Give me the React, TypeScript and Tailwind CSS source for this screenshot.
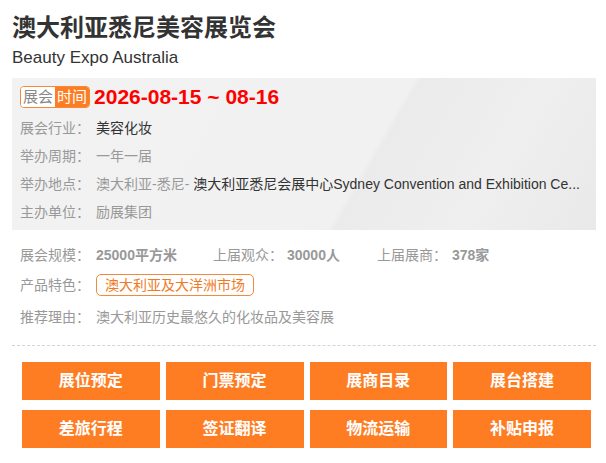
import React from "react";

const font = { fontFamily: '"Liberation Sans", Arial, "Noto Sans CJK SC", sans-serif' };

function Row({ label, children }: { label: string; children: React.ReactNode }) {
  return (
    <div className="flex h-[28px] items-center text-[14px] whitespace-nowrap">
      <span className="w-[76px] shrink-0 text-[#999]">{label}</span>
      <div className="min-w-0 flex-1 overflow-hidden">{children}</div>
    </div>
  );
}

const buttons = ["展位预定", "门票预定", "展商目录", "展台搭建", "差旅行程", "签证翻译", "物流运输", "补贴申报"];

export default function App() {
  return (
    <div className="w-[606px] h-[463px] bg-white text-[#333]" style={font}>
      <div className="px-[12px] pt-[13px]">
        <h1 className="text-[24px] font-bold leading-[30px] text-[#333]">澳大利亚悉尼美容展览会</h1>
        <div className="mt-[3px] text-[17px] leading-[24px] text-[#333]">Beauty Expo Australia</div>

        <div className="mt-[8px] h-[152px] w-[584px] bg-[#f1f1f1] pl-[8px] pr-[16px] pt-[8px]"
          style={{ backgroundImage: "linear-gradient(120deg, #f2f2f2 0%, #f1f1f1 60%, #ebebeb 61%, #efefef 80%, #e9e9e9 100%)" }}>
          <div className="flex h-[22px] items-center">
            <div className="flex h-[22px] overflow-hidden rounded-[4px] border border-[#f38a3a] text-[15px] leading-[20px]">
              <span className="bg-white px-[2px] text-[#888]">展会</span>
              <span className="bg-[#fe7d23] px-[2px] text-white">时间</span>
            </div>
            <span className="ml-[4px] text-[21px] font-bold text-[#ff0000]">2026-08-15 ~ 08-16</span>
          </div>
          <div className="mt-[6px]">
            <Row label="展会行业："><span className="text-[#333]">美容化妆</span></Row>
            <Row label="举办周期："><span className="text-[#999]">一年一届</span></Row>
            <Row label="举办地点：">
              <span className="text-[#999]">澳大利亚-悉尼- </span>
              <span className="text-[#333]">澳大利亚悉尼会展中心Sydney Convention and Exhibition Ce...</span>
            </Row>
            <Row label="主办单位："><span className="text-[#999]">励展集团</span></Row>
          </div>
        </div>

        <div className="mt-[11px] pl-[8px]">
          <div className="flex h-[28px] items-center text-[14px] whitespace-nowrap">
            <span className="w-[76px] text-[#999]">展会规模：</span>
            <span className="w-[117px] font-bold text-[#999]">25000平方米</span>
            <span className="w-[74px] text-[#999]">上届观众：</span>
            <span className="w-[90px] font-bold text-[#999]">30000人</span>
            <span className="w-[75px] text-[#999]">上届展商：</span>
            <span className="font-bold text-[#999]">378家</span>
          </div>
          <div className="mt-[2px] flex h-[28px] items-center text-[14px]">
            <span className="w-[76px] text-[#999]">产品特色：</span>
            <span className="flex h-[22px] items-center rounded-[5px] border border-[#f08a3c] px-[8px] text-[#f07a24]">澳大利亚及大洋洲市场</span>
          </div>
          <div className="mt-[4px] flex h-[28px] items-center text-[14px]">
            <span className="w-[76px] text-[#999]">推荐理由：</span>
            <span className="text-[#999]">澳大利亚历史最悠久的化妆品及美容展</span>
          </div>
        </div>

        <div className="mt-[14px] w-[584px] border-t border-dashed border-[#d4d4d4]" />

        <div className="mt-[16px] ml-[10px] grid w-[569px] grid-cols-4 gap-x-[6px] gap-y-[10px]">
          {buttons.map((b) => (
            <div key={b} className="flex h-[38px] items-center justify-center bg-[#fe7d23] text-[16px] font-bold text-white">
              {b}
            </div>
          ))}
        </div>
      </div>
    </div>
  );
}
